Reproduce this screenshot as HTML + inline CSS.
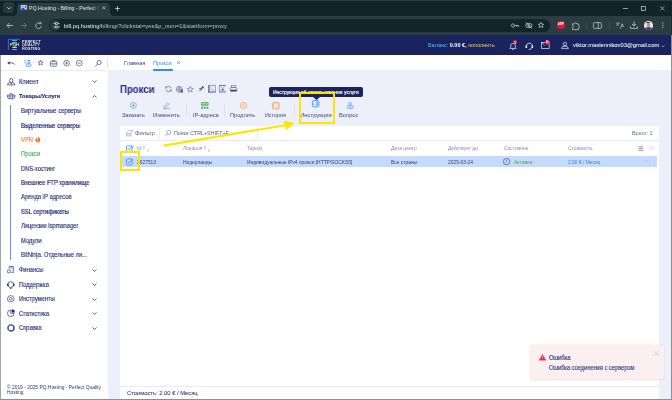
<!DOCTYPE html>
<html><head><meta charset="utf-8">
<style>
*{margin:0;padding:0;box-sizing:border-box}
html,body{width:672px;height:400px;overflow:hidden;background:#fff;font-family:"Liberation Sans",sans-serif;position:relative}
.a{position:absolute;white-space:nowrap;will-change:transform}
.s{-webkit-text-stroke:0.12px currentColor}
svg{position:absolute;overflow:visible}
.t{font-size:6.4px;color:#1e2a72;line-height:8px;transform:scaleX(0.9);transform-origin:0 50%}
.th{font-size:4.9px;color:#858cab;line-height:8px}
.td{font-size:4.9px;color:#2f3b78;line-height:8px}
.lb{font-size:5.6px;color:#3f4a7c;line-height:8px}
.ci{stroke:#c8d1d4;fill:none}.ci:not([stroke-width]){stroke-width:0.75}
.ni{stroke:#2a3578;fill:none}.ni:not([stroke-width]){stroke-width:0.75}
.gi{stroke:#5a6494;fill:none}.gi:not([stroke-width]){stroke-width:0.7}
.wi{stroke:#e9ecf6;fill:none}.wi:not([stroke-width]){stroke-width:0.8}
</style></head><body>
<!-- ============ browser chrome ============ -->
<div class="a" style="left:0;top:0;width:672px;height:16px;background:#0f2529"></div>
<div class="a" style="left:0;top:0;width:672px;height:0.8px;background:#2a3d42"></div>
<div class="a" style="left:3px;top:2px;width:11px;height:11.2px;border-radius:3.5px;background:#263a3e"></div>
<svg style="left:6px;top:5.5px" width="6" height="5"><path d="M1.2 1.3 L3 3.1 L4.8 1.3" class="ci" stroke-width="0.9"/></svg>
<div class="a" style="left:17px;top:2.5px;width:93px;height:13.5px;border-radius:4px 4px 0 0;background:#2a3e42"></div>
<div class="a" style="left:13px;top:12px;width:4px;height:4px;background:radial-gradient(circle at 0 0,transparent 3.6px,#2a3e42 4.2px)"></div>
<div class="a" style="left:110px;top:12px;width:4px;height:4px;background:radial-gradient(circle at 100% 0,transparent 3.6px,#2a3e42 4.2px)"></div>
<div class="a" style="left:20px;top:5px;width:6px;height:6px;background:linear-gradient(135deg,#5b6fd8,#1f2f8a);border-radius:1px"></div>
<div class="a" style="left:21.3px;top:5.3px;font-size:4.6px;line-height:5px;font-weight:bold;color:#fff;letter-spacing:-0.3px">PQ</div>
<div class="a" style="left:29px;top:4px;font-size:5.25px;color:#e3e8ea;line-height:8px;width:71px;overflow:hidden;-webkit-mask-image:linear-gradient(90deg,#000 88%,transparent)">PQ.Hosting - Billing - Perfect Quality</div>
<svg style="left:101.6px;top:6.2px" width="4" height="4"><path d="M0.3 0.3 L3.4 3.4 M3.4 0.3 L0.3 3.4" stroke="#c8d1d4" stroke-width="0.7"/></svg>
<svg style="left:115px;top:5.6px" width="5" height="5"><path d="M2.5 0.2 V4.8 M0.2 2.5 H4.8" stroke="#c8d1d4" stroke-width="0.85"/></svg>
<svg style="left:622.8px;top:7.6px" width="6" height="1"><path d="M0 0.5 H5" class="ci" stroke-width="0.7"/></svg>
<svg style="left:641.3px;top:5.7px" width="5" height="5"><rect x="0.35" y="0.35" width="4" height="4" class="ci" stroke-width="0.7"/></svg>
<svg style="left:660.2px;top:5.7px" width="5" height="5"><path d="M0.3 0.3 L4.4 4.4 M4.4 0.3 L0.3 4.4" class="ci" stroke-width="0.7"/></svg>

<div class="a" style="left:0;top:16px;width:672px;height:18.6px;background:#2a3e42"></div>
<svg style="left:5.5px;top:22px" width="8" height="7"><path d="M7 3.5 H1 M3.5 1 L1 3.5 L3.5 6" class="ci" stroke-width="0.8"/></svg>
<svg style="left:20px;top:22px" width="8" height="7"><path d="M0.5 3.5 H6.5 M4 1 L6.5 3.5 L4 6" stroke="#6a7b7e" fill="none" stroke-width="0.8"/></svg>
<svg style="left:35px;top:22px" width="7" height="7"><path d="M5.6 1.8 A2.8 2.8 0 1 0 6.3 4.2" class="ci" stroke-width="0.8"/><path d="M4 1.6 H6 V-0.3" class="ci" stroke-width="0.8"/></svg>
<div class="a" style="left:49.2px;top:18.5px;width:501px;height:13.4px;border-radius:6.7px;background:#10262a"></div>
<div class="a" style="left:50.4px;top:20.1px;width:9.8px;height:10.6px;border-radius:5.3px;background:#273b3f"></div>
<svg style="left:52.5px;top:22px" width="7" height="7"><path d="M0.3 1.5 H2.5 M4.5 1.5 H6.7 M0.3 5 H2.5 M4.5 5 H6.7" class="ci"/><rect x="2.5" y="0.6" width="2" height="1.8" class="ci" stroke-width="0.7"/><rect x="2.5" y="4.1" width="2" height="1.8" class="ci" stroke-width="0.7"/></svg>
<div class="a" style="left:63.5px;top:21.8px;font-size:5.8px;line-height:8px;color:#b9c5c9"><span style="color:#eef2f3">bill.pq.hosting</span>/billmgr?clickstat=yes&amp;p_num=1&amp;startform=proxy</div>
<svg style="left:511px;top:23px" width="8" height="5"><circle cx="2" cy="2.5" r="1.6" class="ci"/><path d="M3.6 2.5 H7.5 V3.8 M5.8 2.5 V3.5" class="ci" stroke-width="0.75"/></svg>
<svg style="left:524.5px;top:22px" width="8" height="7"><ellipse cx="3.8" cy="3.5" rx="3.2" ry="2.2" class="ci"/><circle cx="3.8" cy="3.5" r="1" class="ci"/><path d="M0.8 0.5 L7 6.5" class="ci"/></svg>
<svg style="left:537.6px;top:22.4px" width="7" height="6"><path d="M3 0.3 L3.8 2.2 L5.8 2.3 L4.3 3.6 L4.8 5.6 L3 4.5 L1.2 5.6 L1.7 3.6 L0.2 2.3 L2.2 2.2 Z" class="ci" stroke-width="0.7"/></svg>
<div class="a" style="left:556.8px;top:21.2px;width:7.6px;height:7.6px;border-radius:50%;background:#e3173d"></div>
<div class="a" style="left:556.8px;top:23.3px;width:7.6px;font-size:2.9px;font-weight:bold;color:#fff;text-align:center;line-height:3.5px">ABP</div>
<svg style="left:572px;top:21.5px" width="8" height="8"><path d="M0.5 1.8 H2.6 A1 1 0 0 1 4.6 1.8 H6.5 V3.5 A1 1 0 0 1 6.5 5.5 V7.5 H0.5 V5.5 A1 1 0 0 0 0.5 3.5 Z" class="ci" stroke-width="0.7"/></svg>
<div class="a" style="left:585.5px;top:21.5px;width:0.8px;height:8px;background:#3a4d51"></div>
<svg style="left:592.5px;top:22px" width="9" height="7"><rect x="0.4" y="0.6" width="8" height="5.8" rx="0.8" class="ci" stroke-width="0.7"/><path d="M5.2 0.6 V6.4" class="ci" stroke-width="0.7"/></svg>
<div class="a" style="left:608.5px;top:21.5px;width:0.8px;height:8px;background:#3a4d51"></div>
<svg style="left:615.5px;top:22px" width="8" height="7"><path d="M0.3 1.2 H3.8 M0.3 3 H3 M4.5 6.5 L6.2 1.8 L7.6 5" class="ci" stroke-width="0.75"/></svg>
<svg style="left:630px;top:21px" width="8" height="8"><path d="M4 0.3 V5 M2 3 L4 5 L6 3 M0.5 5.5 V7.3 H7.5 V5.5" class="ci" stroke-width="0.8"/></svg>
<div class="a" style="left:644px;top:21px;width:8.6px;height:8.6px;border-radius:50%;background:#e9e4dc;overflow:hidden"><div style="position:absolute;left:2.6px;top:1.4px;width:3.6px;height:4.4px;border-radius:45%;background:#b89080"></div><div style="position:absolute;left:2.4px;top:0.9px;width:4px;height:1.6px;border-radius:2px 2px 0 0;background:#4a3a3a"></div><div style="position:absolute;left:0.8px;top:5.8px;width:7px;height:4px;border-radius:50% 50% 0 0;background:#3d3f8a"></div></div>
<svg style="left:662px;top:22.3px" width="2" height="7"><circle cx="0.8" cy="0.8" r="0.6" fill="#c8d1d4"/><circle cx="0.8" cy="3.2" r="0.6" fill="#c8d1d4"/><circle cx="0.8" cy="5.6" r="0.6" fill="#c8d1d4"/></svg>
<div class="a" style="left:670.5px;top:16px;width:1.5px;height:19px;background:#1a2d31"></div>

<!-- ============ site header ============ -->
<div class="a" style="left:0;top:34.6px;width:672px;height:20.4px;background:#19245f"></div>
<svg style="left:8px;top:38.8px" width="13" height="12"><path d="M0.4 11 V0.4 H12" stroke="#3a9ad6" stroke-width="0.7" fill="none"/></svg>
<div class="a" style="left:11.8px;top:40.1px;width:5.4px;height:1.1px;border-radius:0.5px;background:#3cc3ea"></div>
<div class="a" style="left:11.8px;top:41.9px;width:5.4px;height:1.1px;border-radius:0.5px;background:#5fd46a"></div>
<div class="a" style="left:9.7px;top:43.4px;font-size:3.9px;line-height:3.6px;font-weight:bold;color:#f2f4fa;letter-spacing:0px;transform:scaleX(1.05);transform-origin:0 0">PQH</div>
<div class="a" style="left:11.8px;top:47.2px;width:5.4px;height:1.1px;border-radius:0.5px;background:#f1d23c"></div>
<div class="a" style="left:11.8px;top:48.8px;width:5.4px;height:1.1px;border-radius:0.5px;background:#c780ec"></div>
<div class="a" style="left:22px;top:39.6px;font-size:3.6px;line-height:4px;color:#eef0f8;font-weight:bold;letter-spacing:0.3px">PERFECT</div>
<div class="a" style="left:22px;top:43.2px;font-size:3.6px;line-height:4px;color:#eef0f8;font-weight:bold;letter-spacing:0.3px">QUALITY</div>
<div class="a" style="left:22px;top:46.7px;font-size:3.6px;line-height:4px;color:#eef0f8;font-weight:bold;letter-spacing:0.3px">HOSTING</div>
<div class="a" style="left:428px;top:41px;font-size:5.5px;line-height:8px;color:#4cc2f2">Баланс: <b style="color:#fff;-webkit-text-stroke:0">0.00 €,</b> <span style="color:#f3cd4e">пополнить</span></div>
<svg style="left:509px;top:41.5px" width="8" height="8"><path d="M1.6 5.6 V3.8 A2.4 2.4 0 0 1 6.4 3.8 V5.6 L7.2 6.4 H0.8 Z M3.1 7.3 H4.9" class="wi" stroke-width="0.7"/></svg>
<div class="a" style="left:513.1px;top:40.4px;width:4.4px;height:4.4px;border-radius:50%;background:#e6284e"></div>
<div class="a" style="left:513.1px;top:40.6px;width:4.4px;font-size:3px;line-height:4px;text-align:center;color:#fff;font-weight:bold">1</div>
<svg style="left:524.5px;top:41.8px" width="9" height="8"><path d="M1.4 4.6 A3 3 0 1 1 7.2 5.2" class="wi" stroke-width="0.9"/><rect x="0.5" y="3.6" width="1.6" height="2.4" rx="0.6" fill="#e9ecf6"/><rect x="6.5" y="3.6" width="1.6" height="2.4" rx="0.6" fill="#e9ecf6"/><path d="M7.2 5.6 Q6.6 7.3 4.6 7.3" class="wi" stroke-width="0.6"/><circle cx="4.3" cy="7.3" r="0.6" fill="#e9ecf6"/></svg>
<svg style="left:541px;top:41.6px" width="9" height="7"><rect x="0.35" y="0.4" width="7.8" height="6.2" class="wi" stroke-width="0.7"/><path d="M0.35 0.4 L3.6 3.4" class="wi" stroke-width="0.6"/></svg>
<div class="a" style="left:545px;top:40.1px;width:5px;height:5px;border-radius:50%;background:#e6284e"></div>
<div class="a" style="left:545px;top:40.6px;width:5px;font-size:2.7px;line-height:4px;text-align:center;color:#fff;font-weight:bold">9+</div>
<svg style="left:561px;top:41.8px" width="8" height="7"><circle cx="3.9" cy="2" r="1.7" class="wi" stroke-width="0.7"/><path d="M0.4 6.6 Q0.6 3.9 3.9 3.9 Q7.2 3.9 7.4 6.6 Z M3.9 3.9 V5.2" class="wi" stroke-width="0.7"/></svg>
<div class="a" style="left:572.5px;top:41px;font-size:5.82px;line-height:8px;color:#f2f4fa;-webkit-text-stroke:0.05px #fff">viktor.maslennikov03@gmail.com</div>
<svg style="left:661px;top:44.5px" width="4" height="3"><path d="M0.5 0.5 L2 2 L3.5 0.5" fill="none" stroke="#b8c0de" stroke-width="0.6"/></svg>

<!-- ============ sidebar ============ -->
<div class="a" style="left:0;top:55px;width:1.2px;height:345px;background:#a2a4aa"></div>
<div class="a" style="left:1px;top:70px;width:106px;height:0.8px;background:#e8ebf4"></div>
<svg style="left:7px;top:61px" width="8" height="4"><path d="M7.8 3.6 Q7.2 1.9 4.5 1.9 H1.2" class="ni" stroke-width="0.75"/><path d="M0.2 1.9 L2.6 0.2 V3.6 Z" fill="#2a3578"/></svg>
<svg style="left:24px;top:59.7px" width="8" height="7"><rect x="0" y="0.2" width="3.2" height="1" fill="#8fc0fa"/><rect x="3.8" y="0.1" width="2.3" height="1.2" rx="0.5" fill="#2f88f6"/><rect x="0" y="2.3" width="3.2" height="1" fill="#8fc0fa"/><rect x="3.8" y="2.2" width="2.3" height="1.2" rx="0.5" fill="#2f88f6"/><rect x="2.3" y="3.9" width="4.6" height="2.7" rx="0.5" fill="#cfe3fd" stroke="#3d8ff5" stroke-width="0.6"/></svg>
<svg style="left:37.9px;top:60.4px" width="6" height="6"><path d="M2.6 0.3 L3.3 2 L5.1 2.1 L3.7 3.2 L4.2 5.1 L2.6 4.1 L1 5.1 L1.5 3.2 L0.1 2.1 L1.9 2 Z" class="ni" stroke-width="0.6"/></svg>
<svg style="left:49.9px;top:60.3px" width="8" height="7"><rect x="0.35" y="1.4" width="6.4" height="4.8" rx="0.7" class="ni" stroke-width="0.6"/><path d="M2.3 1.4 V0.4 H4.8 V1.4 M0.35 3.4 H6.75" class="ni" stroke-width="0.55"/><rect x="1.5" y="3.6" width="4" height="1.6" fill="#aab2d4"/></svg>
<svg style="left:62.8px;top:60.4px" width="8" height="7"><circle cx="3.65" cy="3.1" r="2.9" class="ni" stroke-width="0.6"/><path d="M3.65 1.5 V4.7 M2.1 3.1 H5.2" class="ni" stroke-width="0.6"/></svg>
<svg style="left:75.7px;top:60.4px" width="7" height="7"><circle cx="3.25" cy="3.1" r="2.9" class="ni" stroke-width="0.6"/><path d="M1.8 3.1 H4.7" class="ni" stroke-width="0.65"/></svg>
<svg style="left:95.1px;top:60px" width="7" height="7"><circle cx="4.1" cy="2.5" r="2.1" class="ni" stroke-width="0.65"/><path d="M2.6 4 L0.4 6.2" class="ni" stroke-width="0.8"/></svg>
<div class="a" style="left:107px;top:57.5px;width:0.8px;height:10.5px;background:#e3e6f0"></div>

<svg style="left:6.8px;top:78.2px" width="9" height="8"><path d="M2.6 2.6 Q2.6 0.4 4.2 0.4 Q5.8 0.4 5.8 2.6 Q5.8 4.6 4.2 4.6 Q2.6 4.6 2.6 2.6 Z" class="ni" stroke-width="0.75"/><path d="M0.4 6.9 Q0.6 4.9 2.8 4.6 L4.2 5.9 L5.6 4.6 Q7.8 4.9 8 6.9 Z" class="ni" stroke-width="0.7"/><path d="M3.6 5.4 L4.2 6.6 L4.8 5.4 Z" fill="#2a3578"/></svg>
<div class="a t s" style="left:19px;top:77.6px;font-size:6.6px">Клиент</div>
<svg style="left:91.8px;top:80.3px" width="5" height="3"><path d="M0.5 0.5 L2.5 2.4 L4.5 0.5" class="ni" stroke-width="0.8"/></svg>
<svg style="left:6.8px;top:92.4px" width="9" height="8"><path d="M2.4 3 Q4.2 -0.3 6 3" class="ni" stroke-width="0.7"/><path d="M0.4 3.1 H8 Q8 6.6 6.6 6.7 H1.8 Q0.4 6.6 0.4 3.1 Z" class="ni" stroke-width="0.7"/><path d="M0.8 4.8 H7.6 M2.9 3.1 V6.7 M5.5 3.1 V6.7" class="ni" stroke-width="0.5"/></svg>
<div class="a t" style="left:19.2px;top:92px;font-weight:bold;font-size:5.6px;transform:none;-webkit-text-stroke:0.1px currentColor">Товары/Услуги</div>
<svg style="left:91.8px;top:94.8px" width="5" height="3"><path d="M0.5 2.4 L2.5 0.5 L4.5 2.4" class="ni" stroke-width="0.8"/></svg>
<div class="a" style="left:10.2px;top:105px;width:0.9px;height:155px;background:#6e8fe6"></div>
<div class="a t s" style="left:21px;top:106.6px">Виртуальные серверы</div>
<div class="a t s" style="left:21px;top:121.5px;-webkit-text-stroke:0.2px currentColor">Выделенные серверы</div>
<div class="a t s" style="left:21px;top:135.6px;color:#f07a2a">VPN</div>
<svg style="left:35px;top:135.8px" width="6" height="7"><path d="M2.8 0.2 Q5.6 2.6 5.3 4.6 Q4.9 6.7 2.9 6.7 Q0.7 6.7 0.4 4.6 Q0.3 3 1.6 2.1 Q1.7 3.5 2.8 3.8 Q3.6 2.3 2.8 0.2 Z" fill="#f26d22"/><path d="M2.9 4 Q4 5 3.6 5.8 Q3.2 6.3 2.7 6.1 Q2.1 5.8 2.4 5 Z" fill="#ffd2a8"/></svg>
<div class="a t s" style="left:21px;top:150px;color:#4aae52">Прокси</div>
<div class="a t s" style="left:21px;top:164.7px">DNS-хостинг</div>
<div class="a t s" style="left:21px;top:178.9px;font-size:6.4px;-webkit-text-stroke:0.2px currentColor">Внешнее FTP хранилище</div>
<div class="a t s" style="left:21px;top:193.2px">Аренда IP адресов</div>
<div class="a t s" style="left:21px;top:207.9px;font-size:6.4px;-webkit-text-stroke:0.2px currentColor">SSL сертификаты</div>
<div class="a t s" style="left:21px;top:222.3px">Лицензии ispmanager</div>
<div class="a t s" style="left:21px;top:236.7px">Модули</div>
<div class="a t s" style="left:21px;top:251px">BitNinja. Отдельные ли...</div>

<svg style="left:7.4px;top:266px" width="8" height="8"><path d="M2.2 2.6 V0.4 H6.3 V6.6 H4.3" class="ni" stroke-width="0.7"/><path d="M3.4 1.6 H5.3 M4.4 2.9 H5.3" class="ni" stroke-width="0.55"/><circle cx="1.9" cy="5.4" r="1.6" class="ni" stroke-width="0.7"/></svg>
<div class="a t s" style="left:19px;top:266px">Финансы</div>
<svg style="left:91.8px;top:268.8px" width="5" height="3"><path d="M0.5 0.5 L2.5 2.4 L4.5 0.5" class="ni" stroke-width="0.8"/></svg>
<svg style="left:7px;top:280.5px" width="8" height="8"><circle cx="3.75" cy="3.6" r="2.9" class="ni" stroke-width="0.75"/><rect x="0" y="2.6" width="1.5" height="2.4" rx="0.6" fill="#2a3578"/><rect x="6" y="2.6" width="1.5" height="2.4" rx="0.6" fill="#2a3578"/><path d="M3 7.3 H4.6" class="ni" stroke-width="0.9"/></svg>
<div class="a t s" style="left:19px;top:280.5px">Поддержка</div>
<svg style="left:91.8px;top:283.2px" width="5" height="3"><path d="M0.5 0.5 L2.5 2.4 L4.5 0.5" class="ni" stroke-width="0.8"/></svg>
<svg style="left:7px;top:295px" width="8" height="8"><path d="M3.75 0.2 L4.6 1.1 L5.9 0.9 L6.2 2.2 L7.3 3 L6.7 4.1 L7.1 5.4 L5.8 5.8 L5.2 7 L3.75 6.6 L2.3 7 L1.7 5.8 L0.4 5.4 L0.8 4.1 L0.2 3 L1.3 2.2 L1.6 0.9 L2.9 1.1 Z" class="ni" stroke-width="0.6" stroke-linejoin="round"/><ellipse cx="3.75" cy="3.8" rx="1.6" ry="1.3" class="ni" stroke-width="0.6"/></svg>
<div class="a t s" style="left:19px;top:295px">Инструменты</div>
<svg style="left:91.8px;top:297.6px" width="5" height="3"><path d="M0.5 0.5 L2.5 2.4 L4.5 0.5" class="ni" stroke-width="0.8"/></svg>
<svg style="left:7px;top:309px" width="9" height="9"><path d="M3.8 1 A3.3 3.3 0 1 0 7.1 4.3 H3.8 Z" class="ni" stroke-width="0.7"/><path d="M4.7 0.3 A3.3 3.3 0 0 1 7.9 3.5 H4.7 Z" fill="#1f2d82"/></svg>
<div class="a t s" style="left:19px;top:309.6px">Статистика</div>
<svg style="left:91.8px;top:312px" width="5" height="3"><path d="M0.5 0.5 L2.5 2.4 L4.5 0.5" class="ni" stroke-width="0.8"/></svg>
<svg style="left:7px;top:324px" width="8" height="8"><circle cx="3.95" cy="3.95" r="3.05" fill="none" stroke="#3a4690" stroke-width="1.4"/><path d="M1.6 1.6 L2.9 2.9 M6.3 1.6 L5 2.9 M1.6 6.3 L2.9 5 M6.3 6.3 L5 5" stroke="#dfe2f0" stroke-width="0.7"/></svg>
<div class="a t s" style="left:19px;top:324px">Справка</div>
<svg style="left:91.8px;top:326.5px" width="5" height="3"><path d="M0.5 0.5 L2.5 2.4 L4.5 0.5" class="ni" stroke-width="0.8"/></svg>
<div class="a" style="left:6.5px;top:384.8px;font-size:4.9px;line-height:5.3px;color:#2a3578">© 2019 - 2025 PQ.Hosting - Perfect Quality<br>Hosting</div>

<!-- ============ main ============ -->
<div class="a" style="left:107.8px;top:55px;width:565px;height:15px;background:#fff"></div>
<div class="a" style="left:107.8px;top:70px;width:565px;height:328.6px;background:#edf0fb"></div>
<div class="a lb" style="left:124px;top:58.6px;color:#3d4775">Главная</div>
<div class="a lb" style="left:153px;top:58.6px;color:#2f8cf0">Прокси</div>
<svg style="left:176.7px;top:61.4px" width="3" height="3"><path d="M0.3 0.3 L2.9 2.9 M2.9 0.3 L0.3 2.9" stroke="#2f8cf0" stroke-width="0.85"/></svg>
<div class="a" style="left:153px;top:69px;width:20px;height:1.6px;border-radius:0.8px;background:#2f8cf0"></div>

<!-- title -->
<div class="a" style="left:119.6px;top:84px;font-size:10px;line-height:12px;font-weight:bold;color:#22307a;transform:scaleX(0.96);transform-origin:0 0">Прокси</div>
<svg style="left:165px;top:86px" width="7" height="6"><path d="M6.2 2.2 A2.8 2.8 0 0 0 1 2 M0.8 3.8 A2.8 2.8 0 0 0 6 4" class="gi"/><path d="M0.6 0.4 V2.1 H2.2 M6.4 5.6 V3.9 H4.8" class="gi" stroke-width="0.6"/></svg>
<svg style="left:176px;top:86px" width="7" height="7"><circle cx="3.3" cy="3.3" r="2.9" class="gi"/><path d="M0.4 3.3 H6.2 M3.3 0.4 Q1.6 3.3 3.3 6.2 M3.3 0.4 Q5 3.3 3.3 6.2" class="gi" stroke-width="0.55"/><path d="M4.6 3.6 H7 V5.5 Q7 6.6 5.8 7 Q4.6 6.6 4.6 5.5 Z" fill="#5a6494"/></svg>
<svg style="left:187px;top:86.3px" width="7" height="6"><path d="M3.3 0.3 L4.1 2.3 L6.3 2.5 L4.6 3.9 L5.1 6 L3.3 4.9 L1.5 6 L2 3.9 L0.3 2.5 L2.5 2.3 Z" class="gi" stroke-width="0.6"/></svg>
<svg style="left:198.2px;top:86.2px" width="7" height="6"><path d="M0.4 5.5 L2.2 3.7" stroke="#5a6494" stroke-width="0.6"/><path d="M1.6 2.6 L3.4 4.4" stroke="#5a6494" stroke-width="0.9" stroke-linecap="round"/><path d="M2.6 3.4 L4.9 1.1" stroke="#5a6494" stroke-width="1.7" stroke-linecap="round"/><path d="M4.2 0.2 L6 2" stroke="#5a6494" stroke-width="0.9" stroke-linecap="round"/></svg>
<svg style="left:207.8px;top:85px" width="8" height="8"><path d="M1.3 0.4 H7.4 V7.1 H1.3 Z" fill="none" stroke="#5a6494" stroke-width="0.6"/><rect x="0" y="0" width="1.6" height="7.5" fill="#5a6494" opacity="0.7"/><rect x="0" y="6.5" width="7.8" height="1" fill="#5a6494" opacity="0.7"/><path d="M3.8 2.2 V5.2 H5.8" stroke="#8d95b8" stroke-width="0.6" fill="none"/></svg>
<svg style="left:219.2px;top:85px" width="7" height="8"><rect x="0" y="0" width="6.9" height="1" fill="#5a6494" opacity="0.85"/><rect x="0" y="6.5" width="6.9" height="1" fill="#5a6494" opacity="0.85"/><rect x="0" y="0" width="1" height="7.5" fill="#5a6494" opacity="0.6"/><path d="M1.8 1.6 L5.6 5.9 M5.6 1.6 L1.8 5.9" stroke="#5a6494" stroke-width="0.55"/><path d="M2.4 5.6 L3.7 3.9 L5 5.6 Z" fill="#3a4578"/></svg>
<svg style="left:230px;top:85.3px" width="8" height="7"><rect x="1.6" y="0.35" width="3.8" height="2.2" fill="none" stroke="#5a6494" stroke-width="0.6"/><rect x="0.3" y="2.6" width="6.5" height="2.6" rx="0.6" fill="none" stroke="#5a6494" stroke-width="0.6"/><rect x="0.3" y="4.9" width="6.5" height="1.6" fill="#2f3a78"/></svg>

<!-- toolbar -->
<svg style="left:130px;top:102px" width="7" height="7"><circle cx="3.4" cy="3.4" r="3" stroke="#4a9df0" fill="none" stroke-width="0.65"/><path d="M3.4 1.8 V5 M1.8 3.4 H5" stroke="#4a9df0" stroke-width="0.7"/></svg>
<div class="a lb" style="left:122.2px;top:110.6px;font-size:5.55px">Заказать</div>
<svg style="left:163px;top:102px" width="7" height="7"><path d="M0.8 5 L4.8 1 L6 2.2 L2 6.2 H0.8 Z M0.5 6.7 H6.5" stroke="#4a9df0" fill="none" stroke-width="0.65"/></svg>
<div class="a lb" style="left:153px;top:110.6px;font-size:5.95px">Изменить</div>
<div class="a" style="left:186px;top:103.5px;width:0.8px;height:12px;background:#dde1ee"></div>
<svg style="left:201.4px;top:101.8px" width="8" height="8"><rect x="0" y="0" width="7.5" height="3.8" rx="0.6" fill="#59b965"/><rect x="0.8" y="0.9" width="4" height="1.4" fill="#a9dcae"/><path d="M5.4 2.8 L6.8 1" stroke="#fff" stroke-width="0.6"/><rect x="0.2" y="4.8" width="1.8" height="2" rx="0.3" fill="#45ad53"/><rect x="2.85" y="4.8" width="1.8" height="2" rx="0.3" fill="#45ad53"/><rect x="5.5" y="4.8" width="1.8" height="2" rx="0.3" fill="#45ad53"/></svg>
<div class="a lb" style="left:193px;top:110.6px;font-size:5.6px">IP-адреса</div>
<div class="a" style="left:224px;top:103.5px;width:0.8px;height:12px;background:#dde1ee"></div>
<svg style="left:240px;top:101.8px" width="8" height="8"><circle cx="3.5" cy="3.5" r="3.1" fill="#fde7d6" stroke="#f5a668" stroke-width="0.9"/><path d="M3.5 1.8 V3.6 L4.7 4.6" stroke="#f5a668" stroke-width="0.7" fill="none"/></svg>
<div class="a lb" style="left:230px;top:110.6px;font-size:5.6px">Продлить</div>
<svg style="left:272px;top:101.8px" width="8" height="8"><rect x="0.45" y="0.45" width="6.6" height="6.4" rx="1" fill="#f9c9a2" stroke="#f5a668" stroke-width="0.9"/><rect x="2" y="1.7" width="3.5" height="3.9" fill="#fff"/><path d="M3.75 2.4 V5" stroke="#f5a668" stroke-width="0.7"/></svg>
<div class="a lb" style="left:265px;top:110.6px;font-size:5.4px">История</div>
<div class="a" style="left:293.5px;top:103.5px;width:0.8px;height:12px;background:#dde1ee"></div>
<svg style="left:312.4px;top:100.4px" width="8" height="8"><rect x="0.4" y="0.5" width="6.6" height="6.4" rx="1.4" fill="#cfe3fd" stroke="#4593f2" stroke-width="0.8"/><rect x="1.8" y="1.8" width="2.4" height="3.8" fill="#fff"/><rect x="4.5" y="1.5" width="1" height="4.2" fill="#2f7fe8"/><rect x="1.4" y="3.4" width="0.9" height="1.6" fill="#2f7fe8"/></svg>
<div class="a lb" style="left:300px;top:110.6px;font-size:5.9px">Инструкция</div>
<svg style="left:347px;top:101.8px" width="7" height="7"><circle cx="3" cy="1.8" r="1.4" stroke="#4a9df0" fill="none" stroke-width="0.7"/><rect x="0.5" y="3.6" width="5.6" height="2.8" rx="0.6" stroke="#4a9df0" fill="#dbe9fc" stroke-width="0.7"/><path d="M2 5 H4.6" stroke="#4a9df0" stroke-width="0.5"/></svg>
<div class="a lb" style="left:339px;top:110.6px;font-size:5.75px">Вопрос</div>

<!-- panel -->
<div class="a" style="left:119.8px;top:125.5px;width:539px;height:273.1px;background:#fff"></div>
<div class="a" style="left:119.8px;top:139.6px;width:539px;height:0.8px;background:#e8ebf4"></div>
<svg style="left:125.7px;top:130px" width="8" height="7"><path d="M2.4 0.5 H6.8 L4.6 3" stroke="#a4abc6" stroke-width="0.7" fill="none"/><path d="M2.4 0.5 L0.9 2.2" stroke="#a4abc6" stroke-width="0.6" fill="none"/><rect x="0.4" y="3.2" width="4.6" height="2.7" fill="none" stroke="#a4abc6" stroke-width="0.7"/><path d="M1 4.5 H4.4" stroke="#c5cadc" stroke-width="0.6"/></svg>
<div class="a lb" style="left:135px;top:129.2px;font-size:5.9px;color:#4d5886">Фильтр</div>
<div class="a" style="left:159px;top:127.5px;width:0.8px;height:10.5px;background:#e8ebf4"></div>
<svg style="left:164.8px;top:130.2px" width="7" height="6"><circle cx="3.9" cy="2.4" r="2" stroke="#4a7fd6" fill="none" stroke-width="0.6"/><path d="M2.5 3.8 L0.5 5.8" stroke="#4a7fd6" stroke-width="0.7"/></svg>
<div class="a lb" style="left:174.4px;top:129.4px;font-size:5.3px;color:#4f5983">Поиск CTRL+SHIFT+F</div>
<div class="a" style="left:256.5px;top:127.5px;width:0.8px;height:10.5px;background:#e8ebf4"></div>
<div class="a lb" style="left:632.2px;top:129.4px;font-size:5.5px;color:#646d92">Всего: 1</div>

<svg style="left:126px;top:144.5px" width="8" height="7"><rect x="0.4" y="0.9" width="5.8" height="5.6" rx="0.8" stroke="#3b8fe8" fill="none" stroke-width="0.8"/><path d="M1.7 3.3 L3.2 4.8 L6.6 0.7" stroke="#3b8fe8" fill="none" stroke-width="0.9"/></svg>
<div class="a th" style="left:137.3px;top:145.4px">Id</div>
<svg style="left:142px;top:146px" width="4" height="5"><path d="M0.3 0.3 H3.5 L2.3 2 V4.2 L1.5 3.6 V2 Z" fill="#c5c9da"/></svg>
<div class="a th" style="left:146.8px;top:146.6px;font-size:3.5px">1</div>
<div class="a th" style="left:183px;top:145.4px;font-style:italic">Локация</div>
<svg style="left:203.3px;top:146px" width="4" height="5"><path d="M0.3 0.3 H3.5 L2.3 2 V4.2 L1.5 3.6 V2 Z" fill="#c5c9da"/></svg>
<div class="a th" style="left:208.3px;top:146.6px;font-size:3.5px">2</div>
<div class="a th" style="left:246.8px;top:145.4px">Тариф</div>
<div class="a th" style="left:390.8px;top:145.4px;font-size:4.96px">Дата центр</div>
<div class="a th" style="left:448.3px;top:145.4px;font-size:4.85px">Действует до</div>
<div class="a th" style="left:503.8px;top:145.4px">Состояние</div>
<div class="a th" style="left:568px;top:145.4px">Стоимость</div>
<svg style="left:637.5px;top:145.5px" width="6" height="6"><path d="M0.4 0.8 H5.2 M0.4 2.6 H5.2 M0.4 4.4 H5.2" stroke="#5d6690" stroke-width="0.65"/></svg>
<svg style="left:649px;top:146px" width="5" height="5"><circle cx="2.2" cy="2.2" r="1.6" fill="none" stroke="#b8bdd0" stroke-width="0.8" stroke-dasharray="0.7 0.4"/></svg>

<div class="a" style="left:121px;top:156.3px;width:536.3px;height:10.7px;background:#c6dbfb"></div>
<svg style="left:126px;top:157.5px" width="8" height="8"><rect x="0.4" y="0.9" width="5.8" height="6" rx="0.8" stroke="#3b8fe8" fill="none" stroke-width="0.8"/><path d="M1.7 3.6 L3.2 5.1 L6.4 1.2" stroke="#3b8fe8" fill="none" stroke-width="0.9"/></svg>
<div class="a td" style="left:137px;top:158.8px">2627513</div>
<div class="a td" style="left:183px;top:158.8px">Нидерланды</div>
<div class="a td" style="left:246.7px;top:158.8px">Индивидуальные IPv4 прокси [HTTP\SOCKS5]</div>
<div class="a td" style="left:390.6px;top:158.8px">Все страны</div>
<div class="a td" style="left:448.3px;top:158.8px">2025-03-24</div>
<svg style="left:503.3px;top:158.2px" width="8" height="8"><circle cx="3.6" cy="3.6" r="3.2" fill="none" stroke="#4f5a8a" stroke-width="0.75"/><path d="M3.6 1.7 V3.7 L2.4 4.6" fill="none" stroke="#4f5a8a" stroke-width="0.6"/></svg>
<div class="a td" style="left:514px;top:158.8px;color:#46a84e">Активен</div>
<div class="a td" style="left:568px;top:158.8px;color:#3a7ee2">2.00 € / Месяц</div>
<svg style="left:643.6px;top:160.2px" width="7" height="2"><circle cx="1" cy="1" r="0.5" fill="#9aa1bd"/><circle cx="3.3" cy="1" r="0.5" fill="#9aa1bd"/><circle cx="5.6" cy="1" r="0.5" fill="#9aa1bd"/></svg>

<div class="a" style="left:119.8px;top:386.3px;width:539px;height:0.8px;background:#e8ebf4"></div>
<div class="a" style="left:126.5px;top:389.4px;-webkit-text-stroke:0.05px currentColor;font-size:5.8px;line-height:8px;color:#2a3578">Стоимость: 2.00 € / Месяц</div>

<!-- toast -->
<div class="a" style="left:530px;top:345px;width:134px;height:34px;border-radius:3px;background:#fbeff0;box-shadow:0 0.6px 2.4px rgba(110,90,130,0.16)"></div>
<svg style="left:538.5px;top:353.8px" width="7" height="7"><path d="M3.5 0.4 L6.8 6.2 H0.2 Z" fill="#de2a52" stroke="#de2a52" stroke-width="0.4" stroke-linejoin="round"/><path d="M3.5 2.4 V4.2 M3.5 4.9 V5.4" stroke="#fff" stroke-width="0.65"/></svg>
<div class="a t" style="left:549px;top:353.5px;color:#2a3578;font-size:6.4px;-webkit-text-stroke:0.15px currentColor">Ошибка</div>
<div class="a t s" style="left:549px;top:364px;color:#2a3578;font-size:6.3px">Ошибка соединения с сервером</div>
<svg style="left:654px;top:351px" width="5" height="5"><path d="M0.3 0.3 L4.7 4.7 M4.7 0.3 L0.3 4.7" stroke="#b9bdca" stroke-width="0.65"/></svg>

<!-- tooltip -->
<div class="a" style="left:268.7px;top:87.3px;width:94.2px;height:9.5px;border-radius:2px;background:#1a235a"></div>
<svg style="left:312.5px;top:96.6px" width="7" height="3"><path d="M0 0 H7 L3.5 3 Z" fill="#1a235a"/></svg>
<div class="a" style="left:273px;top:88.9px;font-size:4.96px;line-height:7px;color:#fff;-webkit-text-stroke:0.14px #fff">Инструкция об использовании услуги</div>

<!-- annotations -->
<div class="a" style="left:299px;top:91.9px;width:36px;height:31.8px;border:2.1px solid #fde500"></div>
<div class="a" style="left:120.2px;top:150.5px;width:19.7px;height:19.5px;border:2.1px solid #fde500"></div>
<svg style="left:0;top:0" width="672" height="400"><path d="M163.7 145.6 L285.5 125.2" stroke="#fde500" stroke-width="2.15" stroke-linecap="butt"/><path d="M293.2 123.7 L284.6 121.3 L286.1 129.2 Z" fill="#fde500" stroke="#fde500" stroke-width="1.2" stroke-linejoin="round"/></svg>

<!-- bottom border -->
<div class="a" style="left:670.6px;top:35px;width:1.4px;height:365px;background:#8d8f95"></div>
<div class="a" style="left:0;top:398.6px;width:672px;height:1.4px;background:#8d8f95"></div>
</body></html>
